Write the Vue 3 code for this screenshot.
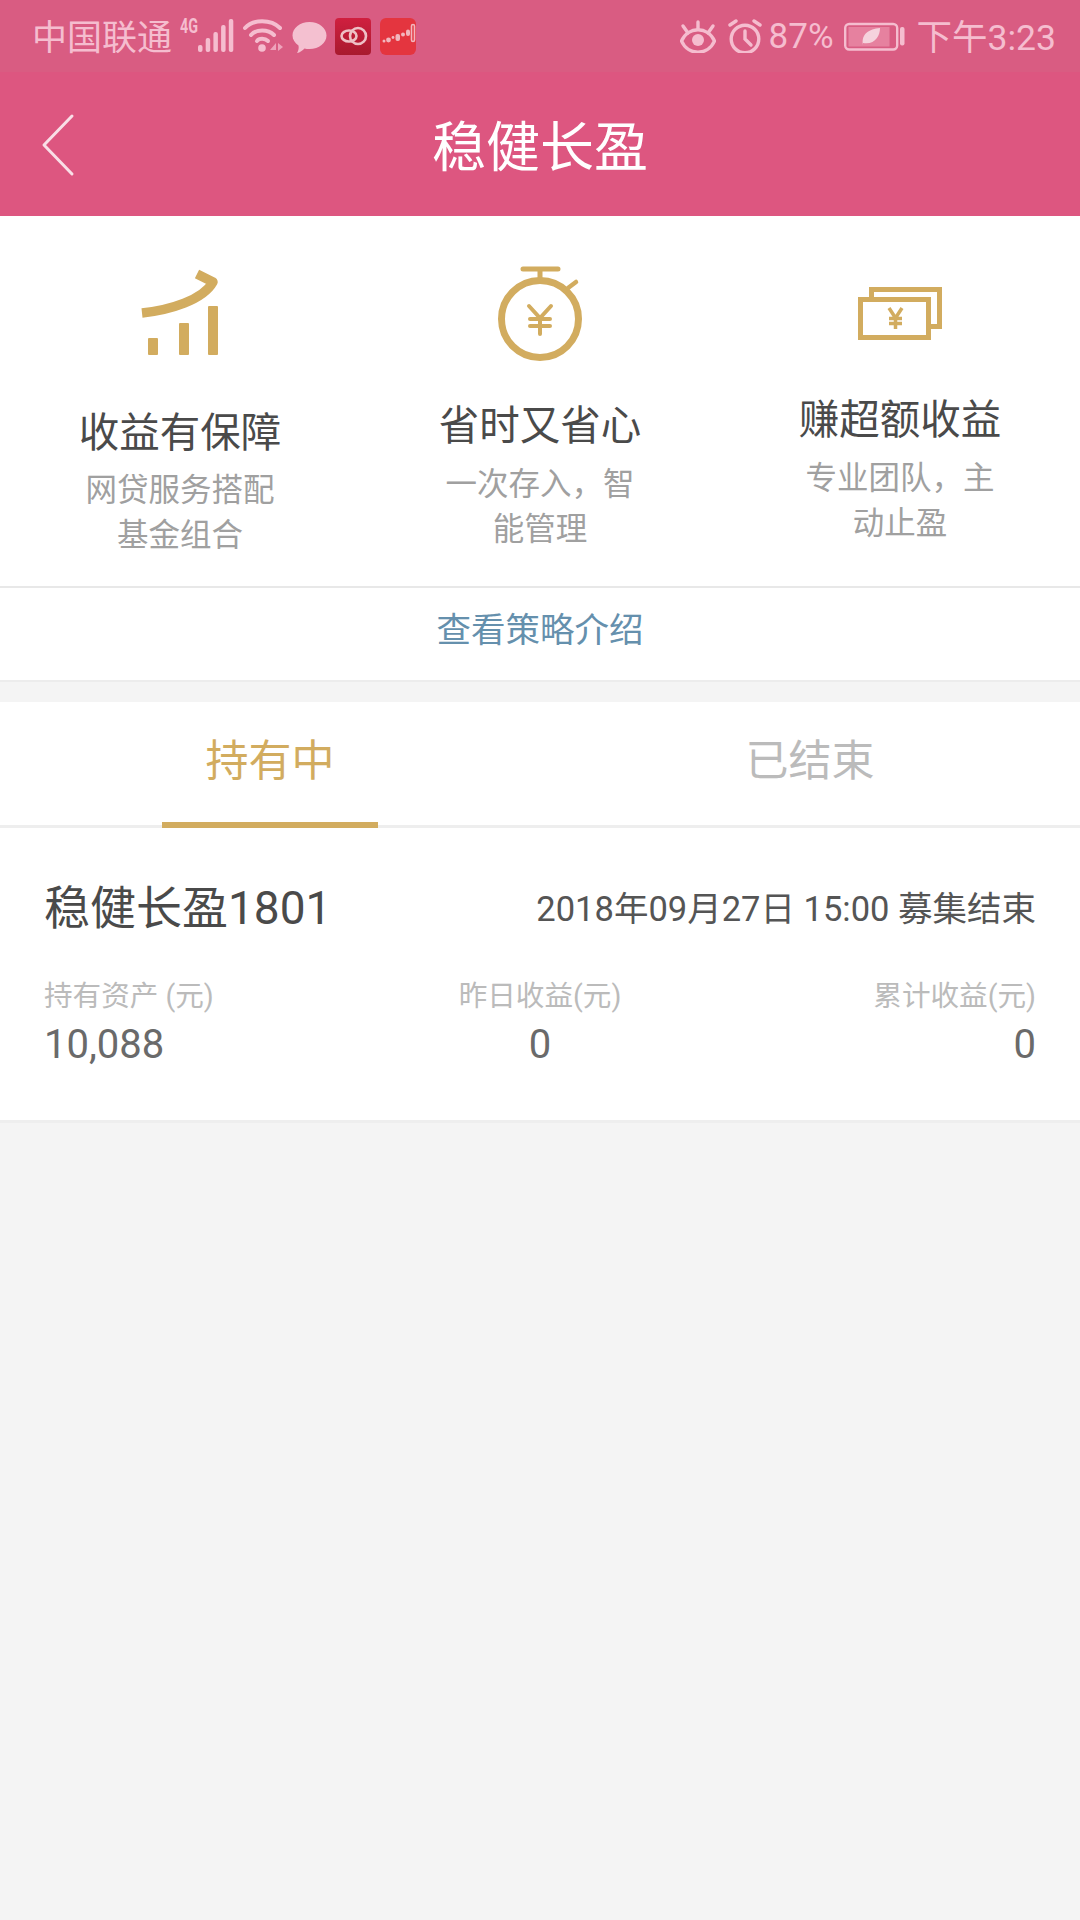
<template>
  <div class="page">
    <div class="statusbar">
      <div class="status-left">
        <span class="carrier">中国联通</span>
        <svg class="ic-signal" width="54" height="48" viewBox="0 -6 54 48">
          <text class="net" x="0" y="15" textLength="18" lengthAdjust="spacingAndGlyphs">4G</text>
          <g fill="#f5bdcf">
            <rect x="18" y="27" width="4.500" height="7" rx="2" />
            <rect x="25.700" y="20" width="4.500" height="14" rx="2" />
            <rect x="33.400" y="14" width="4.500" height="20" rx="2" />
            <rect x="41.100" y="7" width="4.500" height="27" rx="2" />
            <rect x="48.800" y="1" width="4.500" height="33" rx="2" />
          </g>
        </svg>
        <svg class="ic-wifi" width="41" height="36" viewBox="0 0 41 36">
          <g fill="none" stroke="#f5bdcf" stroke-width="4" stroke-linecap="round">
            <path d="M2 10C10 1 28 1 37 10" />
            <path d="M8 17C13 11 25 11 31 17" />
            <path d="M14 23C16 20 22 20 25 23" />
          </g>
          <circle cx="19" cy="30" r="3.800" fill="#f5bdcf" />
          <path d="M33 25l-6 7h6zM35 25v8l5-4z" fill="#eea3bb" />
        </svg>
        <svg class="ic-bubble" width="35" height="35" viewBox="0 0 35 35">
          <path d="M17.500 3C27 3 34.500 9 34.500 16.500S27 30 17.500 30C15.500 30 14 29.800 12.500 29.400C10.500 31.500 8 33.300 5 34C6.500 31.500 7 29 6.500 26.500C3 24 0.500 20.500 0.500 16.500C0.500 9 8 3 17.500 3Z" fill="#f4c0d0" />
        </svg>
        <svg class="ic-app" width="36" height="37" viewBox="0 0 36 37">
          <defs>
            <linearGradient id="appA" x1="0" y1="0" x2="0" y2="1">
              <stop offset="0" stop-color="#d01f3f" />
              <stop offset="1" stop-color="#a81a2e" />
            </linearGradient>
          </defs>
          <rect width="36" height="37" rx="4" fill="url(#appA)" />
          <g fill="none" stroke="#eec0c6" stroke-width="2.600">
            <ellipse cx="14" cy="18" rx="7.500" ry="5.500" />
            <circle cx="23" cy="18" r="8" />
          </g>
        </svg>
        <svg class="ic-app2" width="36" height="37" viewBox="0 0 36 37">
          <rect width="36" height="37" rx="6" fill="#e4353f" />
          <g fill="#f2b6bd">
            <circle cx="4" cy="23" r="1.500" />
            <circle cx="8.500" cy="22" r="2.400" />
            <circle cx="13" cy="19.500" r="1.400" />
            <rect x="15.500" y="16" width="4.500" height="7" rx="2" />
            <circle cx="23" cy="16.500" r="2" />
            <rect x="26" y="11.500" width="4" height="6.500" rx="2" />
          </g>
          <rect x="31.500" y="6.500" width="3" height="17" rx="1.500" fill="none" stroke="#f2b6bd" stroke-width="1.600" />
        </svg>
      </div>
      <div class="status-right">
        <svg class="ic-eye" width="36" height="34" viewBox="0 0 36 34">
          <g fill="none" stroke="#f5bdcf" stroke-width="3.400">
            <path d="M1.500 22C8 7 28 7 34.500 22C28 37 8 37 1.500 22Z" />
            <path d="M18 3v7M3 7l5 7M33 7l-5 7" stroke-linecap="round" />
          </g>
          <circle cx="18" cy="21" r="6" fill="#f5bdcf" />
        </svg>
        <svg class="ic-alarm" width="34" height="34" viewBox="0 0 34 34">
          <g fill="none" stroke="#f5bdcf" stroke-width="3.400" stroke-linecap="round">
            <circle cx="17" cy="20" r="13.800" />
            <path d="M17 12v8l6 6" />
            <path d="M2 6L8 2M32 6L26 2" />
          </g>
        </svg>
        <span class="percent">87%</span>
        <svg class="ic-battery" width="62" height="30" viewBox="0 0 62 30">
          <rect x="1.200" y="3" width="52" height="25.500" rx="4" fill="none" stroke="#f5bdcf" stroke-width="2.400" />
          <rect x="4.500" y="6" width="41" height="19.500" fill="#e6819f" />
          <path d="M19 24C17 13 25 8 36 7C36 15 31 24 19 22Z" fill="#f5d3dd" />
          <rect x="56" y="6" width="4.500" height="18.500" rx="2" fill="#f5bdcf" />
        </svg>
        <span class="clock">下午3:23</span>
      </div>
    </div>

    <div class="navbar">
      <svg class="back" width="36" height="64" viewBox="0 0 36 64">
        <path d="M31 3L3 32L31 61" fill="none" stroke="#f9dfe7" stroke-width="3" stroke-linecap="round" stroke-linejoin="round" />
      </svg>
      <span class="nav-title">稳健长盈</span>
    </div>

    <div class="features">
      <div class="feature">
        <svg class="feature-icon" width="90" height="90" viewBox="135 268 90 90">
          <path d="M142 313C170 310 203 300 213 282L197 274" fill="none" stroke="#d2ac5f" stroke-width="9.500" stroke-linejoin="round" />
          <rect x="148" y="338" width="10" height="17" rx="1" fill="#d2ac5f" />
          <rect x="179" y="323" width="10" height="32" rx="1" fill="#d2ac5f" />
          <rect x="208" y="306" width="10" height="49" rx="1" fill="#d2ac5f" />
        </svg>
        <div class="feature-title first">收益有保障</div>
        <div class="feature-sub">网贷服务搭配基金组合</div>
      </div>
      <div class="feature">
        <svg class="feature-icon" width="90" height="90" viewBox="495 268 90 90">
          <g fill="none" stroke="#d2ac5f" stroke-linecap="round">
            <circle cx="540" cy="319" r="38.500" stroke-width="7" />
            <path d="M523 269H558M540 269V280" stroke-width="5" />
            <path d="M568 288L576 282" stroke-width="4.500" />
            <path d="M529 306L540 318L551 306M530 319H550M530 326H550M540 318V334" stroke-width="4" />
          </g>
        </svg>
        <div class="feature-title second">省时又省心</div>
        <div class="feature-sub">一次存入，智能管理</div>
      </div>
      <div class="feature">
        <svg class="feature-icon" width="90" height="90" viewBox="855 268 90 90">
          <g fill="none" stroke="#d2ac5f">
            <path d="M871.500 297V289.500H939.500V326.500H931" stroke-width="5" />
            <rect x="860.500" y="299.500" width="68" height="38" stroke-width="5" />
            <path d="M889 308L895.500 318L902 308M889 318.500H902M889 323.500H902M895.500 318V329" stroke-width="3.500" />
          </g>
        </svg>
        <div class="feature-title third">赚超额收益</div>
        <div class="feature-sub">专业团队，主动止盈</div>
      </div>
    </div>

    <div class="strategy">查看策略介绍</div>

    <div class="tabs">
      <div class="tab active">持有中</div>
      <div class="tab">已结束</div>
    </div>

    <div class="card">
      <div class="card-head">
        <span class="card-name">稳健长盈1801</span>
        <span class="card-date">2018年09月27日 15:00 募集结束</span>
      </div>
      <div class="stats">
        <div class="stat" v-for="s in stats" :key="s.label">
          <div class="stat-label">{{ s.label }}</div>
          <div class="stat-value">{{ s.value }}</div>
        </div>
      </div>
    </div>
  </div>
</template>

<script setup>
const stats = [
  { label: '持有资产 (元)', value: '10,088' },
  { label: '昨日收益(元)', value: '0' },
  { label: '累计收益(元)', value: '0' }
]
</script>

<style>
html, body {
  margin: 0;
  background: #f4f4f4;
}
</style>

<style scoped>
.page {
  width: 1080px;
  height: 1920px;
  background: #f4f4f4;
  overflow: hidden;
  font-family: Roboto, "Noto Sans CJK SC", sans-serif;
}

.statusbar {
  height: 72px;
  background: #d95c82;
  display: flex;
  justify-content: space-between;
  align-items: center;
  color: #f5bdcf;
  font-size: 35.500px;
  padding: 0 24px 0 32px;
  box-sizing: border-box;
}

.status-left,
.status-right {
  display: flex;
  align-items: center;
}

.carrier {
  font-size: 35px;
  white-space: nowrap;
  margin-bottom: 4px;
}

.net {
  font-family: Roboto, sans-serif;
  font-size: 20px;
  font-weight: 700;
  fill: #f5bdcf;
}

.ic-signal { margin-left: 8px; }
.ic-wifi { margin-left: 9px; }
.ic-bubble { margin-left: 8px; }
.ic-app { margin-left: 8px; }
.ic-app2 { margin-left: 9px; }
.ic-alarm { margin-left: 12px; }
.percent { margin-left: 7px; font-size: 35px; }
.ic-battery { margin-left: 10px; }
.clock { margin-left: 11px; margin-bottom: 4px; white-space: nowrap; }

.navbar {
  height: 144px;
  background: #dd5680;
  position: relative;
  display: flex;
  align-items: center;
  justify-content: center;
  padding-bottom: 2px;
  box-sizing: border-box;
}

.back {
  position: absolute;
  left: 41px;
  top: 41px;
}

.nav-title {
  color: #fff;
  font-size: 54px;
}

.features {
  height: 372px;
  background: #fff;
  border-bottom: 2px solid #e8e8e8;
  box-sizing: border-box;
  display: flex;
}

.feature {
  width: 360px;
  display: flex;
  flex-direction: column;
  align-items: center;
  padding-top: 52px;
  box-sizing: border-box;
}

.feature-icon {
  display: block;
  overflow: visible;
}

.feature-title {
  font-size: 40.500px;
  line-height: 50px;
  color: #4a4a4a;
}

.feature-title.first { margin-top: 50px; }
.feature-title.second { margin-top: 43px; }
.feature-title.third { margin-top: 37px; }

.feature-sub {
  width: 200px;
  margin-top: 11px;
  font-size: 31.500px;
  line-height: 45px;
  color: #a0a0a0;
  text-align: center;
}

.feature-title.first + .feature-sub {
  margin-top: 10px;
}

.strategy {
  height: 94px;
  line-height: 84px;
  background: #fff;
  border-bottom: 2px solid #ececec;
  box-sizing: border-box;
  text-align: center;
  font-size: 34.500px;
  color: #6590ad;
  margin-bottom: 20px;
}

.tabs {
  height: 126px;
  background: #fff;
  border-bottom: 3px solid #eeeeee;
  box-sizing: border-box;
  display: flex;
}

.tab {
  width: 540px;
  text-align: center;
  font-size: 43px;
  line-height: 119px;
  color: #bbb;
  position: relative;
}

.tab.active {
  color: #d2ac5f;
}

.tab.active::after {
  content: "";
  position: absolute;
  left: 162px;
  bottom: -3px;
  width: 216px;
  height: 6px;
  background: #d2ac5f;
}

.card {
  background: #fff;
  height: 295px;
  border-bottom: 3px solid #eeeeee;
  box-sizing: border-box;
  padding: 49px 44px 0;
}

.card-head {
  display: flex;
  justify-content: space-between;
  align-items: center;
  height: 58px;
}

.card-name {
  font-size: 46px;
  color: #4a4a4a;
  margin-bottom: 5px;
}

.card-date {
  font-size: 34.500px;
  color: #555;
}

.stats {
  display: flex;
  justify-content: space-between;
  margin-top: 41px;
}

.stat {
  width: 330px;
}

.stat:nth-child(2) {
  text-align: center;
}

.stat:nth-child(3) {
  text-align: right;
}

.stat-label {
  font-size: 28.600px;
  line-height: 40px;
  color: #bbb;
}

.stat-value {
  font-size: 40px;
  line-height: 50px;
  margin-top: 4px;
  color: #6a6a6a;
}
</style>
